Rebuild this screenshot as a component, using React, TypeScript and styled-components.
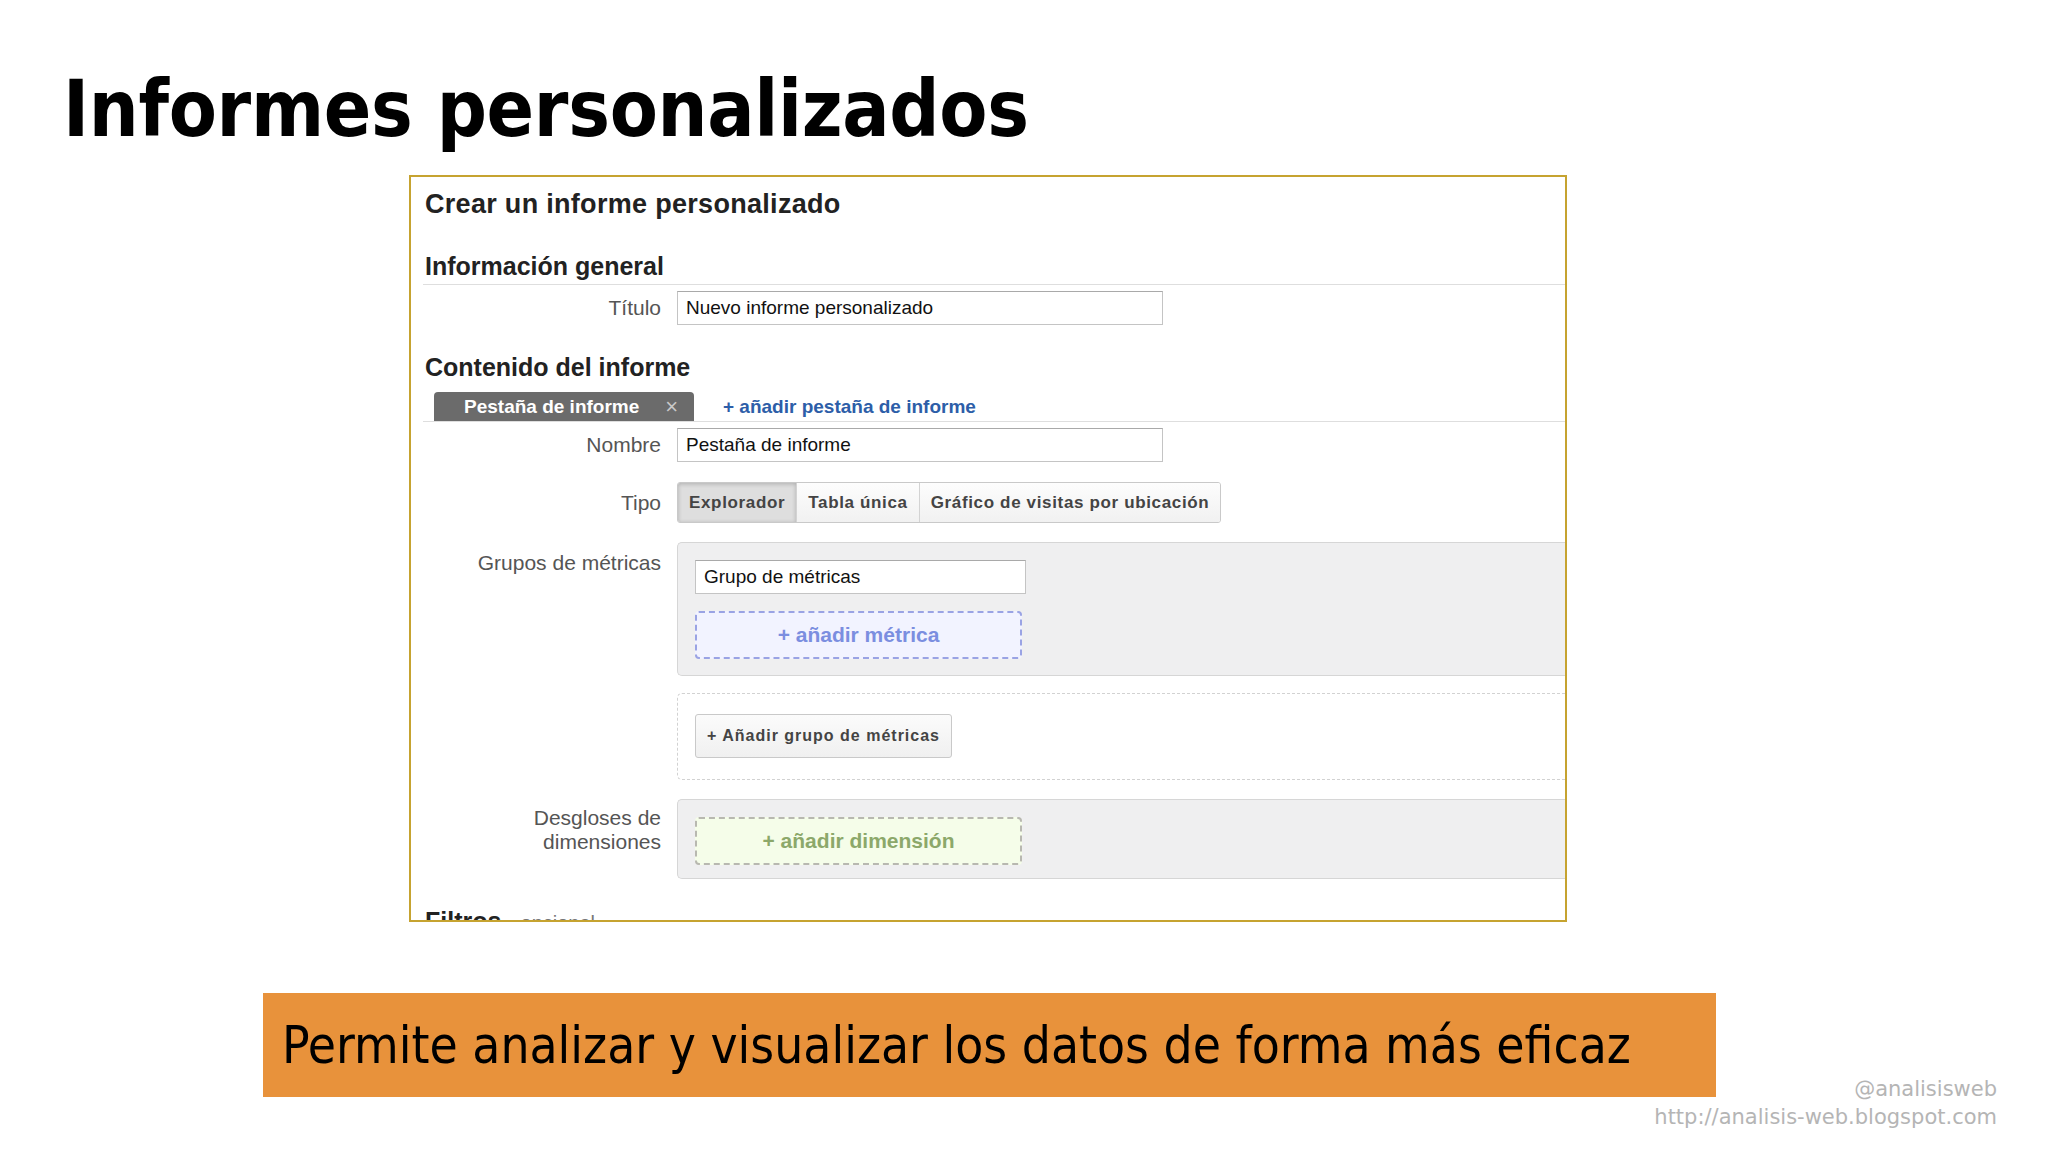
import styled, { createGlobalStyle } from "styled-components";

const GlobalStyle = createGlobalStyle`
  html, body {
    margin: 0;
    padding: 0;
    background: #ffffff;
  }
  * {
    box-sizing: border-box;
  }
`;

const Slide = styled.div`
  width: 2048px;
  height: 1152px;
  overflow: hidden;
  padding-top: 67px;
  background: #ffffff;
`;

const Title = styled.h1`
  margin: 0 0 0 63px;
  height: 85px;
  font-family: "DejaVu Sans Condensed", "DejaVu Sans", sans-serif;
  font-stretch: condensed;
  font-weight: 700;
  font-size: 78px;
  letter-spacing: -0.3px;
  line-height: 85px;
  color: #000;
`;

const Panel = styled.section`
  margin: 23px 0 0 409px;
  width: 1158px;
  height: 747px;
  border: 2px solid #c6a330;
  overflow: hidden;
  font-family: "Liberation Sans", Arial, sans-serif;
  color: #222;
  background: #fff;
`;

const PanelTitle = styled.h2`
  margin: 12px 0 0 14px;
  font-size: 27px;
  letter-spacing: 0.3px;
  line-height: 30px;
  font-weight: 700;
`;

const SectionHeader = styled.h3<{ $gap: number }>`
  margin: ${(p) => p.$gap}px 0 0 12px;
  padding: 0 0 4px 2px;
  font-size: 25px;
  line-height: 28px;
  font-weight: 700;
  border-bottom: 1px solid #dedede;
`;

const SectionTitle = styled.h3<{ $gap: number }>`
  margin: ${(p) => p.$gap}px 0 0 14px;
  font-size: 25px;
  line-height: 28px;
  font-weight: 700;
`;

const Muted = styled.span`
  font-weight: 400;
  font-size: 20px;
  color: #777;
`;

const Row = styled.div<{ $gap: number; $align?: string }>`
  display: grid;
  grid-template-columns: 250px 1fr;
  column-gap: 16px;
  align-items: ${(p) => p.$align ?? "center"};
  margin-top: ${(p) => p.$gap}px;
`;

const Label = styled.div<{ $pad?: number }>`
  text-align: right;
  font-size: 21px;
  line-height: 24px;
  color: #555;
  padding-top: ${(p) => p.$pad ?? 0}px;
`;

const TextInput = styled.div<{ $width: number }>`
  width: ${(p) => p.$width}px;
  height: 34px;
  display: flex;
  align-items: center;
  padding-left: 8px;
  background: #fff;
  border: 1px solid #c4c4c4;
  border-top-color: #a9a9a9;
  font-size: 19px;
  color: #111;
`;

const TabBar = styled.div`
  display: flex;
  align-items: flex-end;
  margin: 11px 0 0 12px;
  border-bottom: 1px solid #dedede;
`;

const Tab = styled.div`
  margin-left: 11px;
  width: 260px;
  height: 29px;
  display: flex;
  align-items: center;
  justify-content: space-between;
  padding: 0 16px 0 30px;
  background: #6b6b6b;
  border-radius: 4px 4px 0 0;
  color: #fff;
  font-size: 19px;
  font-weight: 700;
`;

const TabClose = styled.span`
  color: #c8c8c8;
  font-size: 22px;
  font-weight: 400;
`;

const AddTabLink = styled.a`
  margin: 0 0 2px 29px;
  font-size: 19px;
  line-height: 24px;
  font-weight: 700;
  color: #2d5ea8;
  text-decoration: none;
`;

const ButtonGroup = styled.div`
  display: flex;
  width: fit-content;
  height: 41px;
  border: 1px solid #c9c9c9;
  border-radius: 3px;
  overflow: hidden;
`;

const TypeButton = styled.div<{ $active?: boolean }>`
  display: flex;
  align-items: center;
  padding: 0 11px;
  font-size: 17px;
  letter-spacing: 0.65px;
  font-weight: 700;
  color: #444;
  background: ${(p) =>
    p.$active ? "#dedede" : "linear-gradient(#fdfdfd, #f1f1f1)"};
  box-shadow: ${(p) => (p.$active ? "inset 0 1px 4px rgba(0,0,0,0.22)" : "none")};
  & + & {
    border-left: 1px solid #d3d3d3;
  }
`;

const GrayBox = styled.div<{ $height: number }>`
  height: ${(p) => p.$height}px;
  padding: 17px 0 0 17px;
  background: #efeff0;
  border: 1px solid #d6d6d6;
  border-right: none;
  border-radius: 5px 0 0 5px;
`;

const DashedBox = styled.div`
  height: 87px;
  padding: 20px 0 0 17px;
  border: 1px dashed #d2d2d2;
  border-right: none;
  border-radius: 5px 0 0 5px;
`;

const AddZone = styled.div<{ $tone: "blue" | "green"; $top?: number }>`
  width: 327px;
  height: 48px;
  margin-top: ${(p) => p.$top ?? 0}px;
  display: flex;
  align-items: center;
  justify-content: center;
  border-radius: 4px;
  border: 2px dashed ${(p) => (p.$tone === "blue" ? "#9aa3e4" : "#b8b8b0")};
  background: ${(p) => (p.$tone === "blue" ? "#f2f3ff" : "#f5fde9")};
  color: ${(p) => (p.$tone === "blue" ? "#7b8ee0" : "#8ca86a")};
  font-size: 21px;
  font-weight: 700;
`;

const PlainButton = styled.div`
  width: 257px;
  height: 44px;
  display: flex;
  align-items: center;
  justify-content: center;
  background: linear-gradient(#fbfbfb, #f0f0f0);
  border: 1px solid #c9c9c9;
  border-radius: 3px;
  font-size: 16px;
  letter-spacing: 1px;
  font-weight: 700;
  color: #444;
`;

const Banner = styled.div`
  margin: 71px 0 0 263px;
  width: 1453px;
  height: 104px;
  display: flex;
  align-items: center;
  padding-left: 19px;
  background: #e8923b;
  font-family: "DejaVu Sans Condensed", "DejaVu Sans", sans-serif;
  font-stretch: condensed;
  font-size: 51px;
  color: #000;
`;

const Credits = styled.div`
  margin-top: -22px;
  padding-right: 51px;
  text-align: right;
  font-family: "DejaVu Sans", sans-serif;
  font-size: 21px;
  line-height: 28px;
  color: #b5b5b5;
`;

export default function App() {
  return (
    <Slide>
      <GlobalStyle />
      <Title>Informes personalizados</Title>
      <Panel>
        <PanelTitle>Crear un informe personalizado</PanelTitle>
        <SectionHeader $gap={33}>Información general</SectionHeader>
        <Row $gap={6}>
          <Label>Título</Label>
          <TextInput $width={486}>Nuevo informe personalizado</TextInput>
        </Row>

        <SectionTitle $gap={28}>Contenido del informe</SectionTitle>
        <TabBar>
          <Tab>
            Pestaña de informe
            <TabClose>×</TabClose>
          </Tab>
          <AddTabLink>+ añadir pestaña de informe</AddTabLink>
        </TabBar>
        <Row $gap={6}>
          <Label>Nombre</Label>
          <TextInput $width={486}>Pestaña de informe</TextInput>
        </Row>
        <Row $gap={20}>
          <Label>Tipo</Label>
          <ButtonGroup>
            <TypeButton $active>Explorador</TypeButton>
            <TypeButton>Tabla única</TypeButton>
            <TypeButton>Gráfico de visitas por ubicación</TypeButton>
          </ButtonGroup>
        </Row>
        <Row $gap={19} $align="start">
          <Label $pad={9}>Grupos de métricas</Label>
          <GrayBox $height={134}>
            <TextInput $width={331}>Grupo de métricas</TextInput>
            <AddZone $tone="blue" $top={17}>
              + añadir métrica
            </AddZone>
          </GrayBox>
        </Row>
        <Row $gap={17} $align="start">
          <Label />
          <DashedBox>
            <PlainButton>+ Añadir grupo de métricas</PlainButton>
          </DashedBox>
        </Row>
        <Row $gap={19} $align="start">
          <Label $pad={7}>
            Desgloses de
            <br />
            dimensiones
          </Label>
          <GrayBox $height={80}>
            <AddZone $tone="green">+ añadir dimensión</AddZone>
          </GrayBox>
        </Row>
        <SectionTitle $gap={28}>
          Filtros <Muted>- opcional</Muted>
        </SectionTitle>
      </Panel>
      <Banner>Permite analizar y visualizar los datos de forma más eficaz</Banner>
      <Credits>
        @analisisweb
        <br />
        http://analisis-web.blogspot.com
      </Credits>
    </Slide>
  );
}
